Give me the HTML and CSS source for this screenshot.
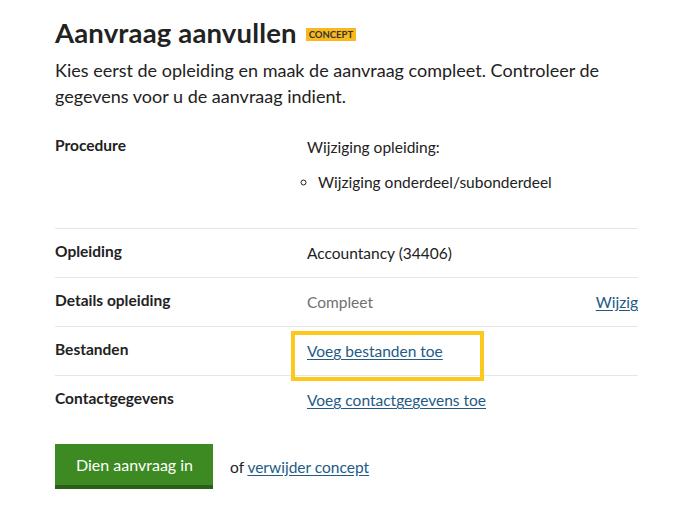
FILE: index.html
```html
<!DOCTYPE html>
<html lang="nl">
<head>
<meta charset="utf-8">
<title>Aanvraag aanvullen</title>
<link rel="stylesheet" href="styles.css">
</head>
<body>
<main class="page">
  <div class="title-row">
    <h1 class="title">Aanvraag aanvullen</h1>
    <span class="badge">CONCEPT</span>
  </div>
  <p class="intro">Kies eerst de opleiding en maak de aanvraag compleet. Controleer de gegevens voor u de aanvraag indient.</p>

  <dl class="summary">
    <div class="row row-procedure">
      <dt class="label">Procedure</dt>
      <dd class="value">
        <p class="value-line">Wijziging opleiding:</p>
        <ul class="sublist"><li>Wijziging onderdeel/subonderdeel</li></ul>
      </dd>
    </div>
    <div class="row">
      <dt class="label">Opleiding</dt>
      <dd class="value">Accountancy (34406)</dd>
    </div>
    <div class="row row-short">
      <dt class="label">Details opleiding</dt>
      <dd class="value muted">Compleet</dd>
      <dd class="action"><a href="#" class="link">Wijzig</a></dd>
    </div>
    <div class="row">
      <dt class="label">Bestanden</dt>
      <dd class="value"><a href="#" class="link focus">Voeg bestanden toe</a></dd>
    </div>
    <div class="row row-last">
      <dt class="label">Contactgegevens</dt>
      <dd class="value"><a href="#" class="link">Voeg contactgegevens toe</a></dd>
    </div>
  </dl>

  <div class="actions">
    <button class="btn" type="button">Dien aanvraag in</button>
    <span class="or">of <a href="#" class="link">verwijder concept</a></span>
  </div>
</main>
</body>
</html>
```

FILE: styles.css
```css
* { box-sizing: border-box; }
html, body { margin: 0; padding: 0; background: #fff; }
body {
  font-family: Lato, "Open Sans", "Noto Sans", sans-serif;
  color: #222;
}
.page {
  width: 638px;
  padding: 15px 0 0 55px;
}
.title-row {
  display: flex;
  align-items: center;
  gap: 9px;
  height: 36px;
}
.title {
  margin: 0;
  font-size: 27.5px;
  font-weight: 700;
  line-height: 36px;
  color: #222;
  letter-spacing: 0.15px;
}
.badge {
  background: #f9b91d;
  color: #333;
  font-size: 9.5px;
  font-weight: 700;
  line-height: 13px;
  padding: 0 3px;
  margin-top: 3px;
}
.intro {
  margin: 6px 0 0;
  font-size: 18px;
  line-height: 26px;
  color: #222;
  width: 560px;
}
.summary {
  margin: 12px 0 0;
}
.row {
  display: flex;
  border-bottom: 1px solid #e6e6e6;
  padding: 12px 0;
  font-size: 15.5px;
  line-height: 24px;
  min-height: 49px;
}
.row-short { min-height: 48px; }
.row-procedure { padding-top: 14px; padding-bottom: 34px; }
.row-last { border-bottom: none; }
.label {
  width: 252px;
  flex: none;
  font-weight: 700;
  margin: 0;
  margin-top: -2px;
  color: #222;
}
.value {
  margin: 0;
  flex: 1;
  color: #222;
}
.value-line { margin: 0 0 11px; }
.sublist {
  margin: 0;
  padding-left: 11px;
  list-style: circle;
}
.sublist li { padding-left: 0; }
.muted { color: #707070; }
.action { margin: 0; }
.link {
  color: #235a86;
  text-decoration: underline;
  text-underline-offset: 2px;
}
.focus {
  position: relative;
}
.focus::after {
  content: "";
  position: absolute;
  left: -16px;
  top: -11px;
  right: -41px;
  bottom: -21px;
  border: 4px solid #fbc81d;
}
.actions {
  display: flex;
  align-items: center;
  gap: 17px;
  margin-top: 19px;
}
.btn {
  font-family: inherit;
  font-size: 16px;
  color: #fff;
  background: #3c8a21;
  border: none;
  border-bottom: 4px solid #2c5e17;
  height: 45px;
  padding: 0 20px 0 21px;
  cursor: pointer;
}
.or {
  font-size: 15.5px;
  color: #222;
}
```
